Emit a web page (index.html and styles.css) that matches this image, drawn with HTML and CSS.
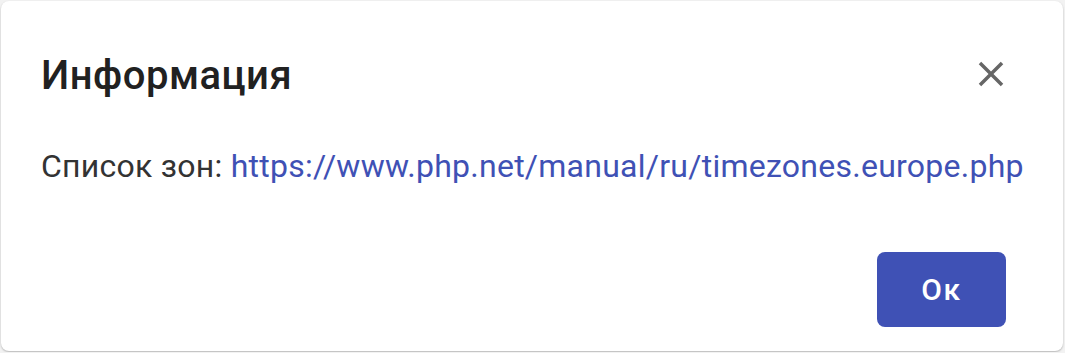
FILE: index.html
```html
<!DOCTYPE html>
<html lang="ru">
<head>
    <meta charset="UTF-8">
    <meta name="viewport" content="width=device-width, initial-scale=1.0">
    <title>Информация</title>
    <link rel="stylesheet" href="styles.css">
</head>
<body>

    <div class="dialog">
        <div class="dialog-header">
            <h2 class="dialog-title">Информация</h2>
            <button class="close-btn" aria-label="Закрыть">
                <svg viewBox="0 0 24 24" width="42" height="42">
                    <path d="M19 6.41L17.59 5 12 10.59 6.41 5 5 6.41 10.59 12 5 17.59 6.41 19 12 13.41 17.59 19 19 17.59 13.41 12z" fill="currentColor"/>
                </svg>
            </button>
        </div>

        <div class="dialog-content">
            Список зон: <a href="https://www.php.net/manual/ru/timezones.europe.php">https://www.php.net/manual/ru/timezones.europe.php</a>
        </div>

        <div class="dialog-actions">
            <button class="ok-btn">Ок</button>
        </div>
    </div>

</body>
</html>
```

FILE: styles.css
```css
body {
    margin: 0;
    background: #f2f2f2;
    font-family: Roboto, "Noto Sans", sans-serif;
}
.dialog {
    box-sizing: border-box;
    width: 1062px;
    height: 350px;
    margin: 1px;
    padding: 54px 57px 0 40px;
    background: white;
    border-radius: 8px;
    box-shadow: 0 1px 2px rgba(0, 0, 0, 0.25);
    display: flex;
    flex-direction: column;
}
.dialog-header {
    display: flex;
    align-items: center;
    justify-content: space-between;
}
.dialog-title {
    margin: 0;
    font-size: 40px;
    line-height: 42px;
    font-weight: 500;
    letter-spacing: 0.5px;
    color: #212121;
}
.close-btn {
    width: 42px;
    height: 42px;
    padding: 0;
    margin: -4px -6px 0 0;
    border: none;
    background: none;
    color: #666;
    cursor: pointer;
}
.close-btn svg {
    display: block;
}
.dialog-content {
    margin-top: 48px;
    font-size: 32px;
    line-height: 42px;
    letter-spacing: 0.25px;
    white-space: nowrap;
    color: #333;
}
.dialog-content a {
    color: #3f51b5;
    text-decoration: none;
}
.dialog-actions {
    display: flex;
    justify-content: flex-end;
    margin-top: auto;
    padding-bottom: 24px;
}
.ok-btn {
    width: 129px;
    height: 75px;
    border: none;
    border-radius: 8px;
    background: #3f51b5;
    color: white;
    font-family: Roboto, sans-serif;
    font-size: 30px;
    font-weight: 500;
    letter-spacing: 1.5px;
    cursor: pointer;
}
```
